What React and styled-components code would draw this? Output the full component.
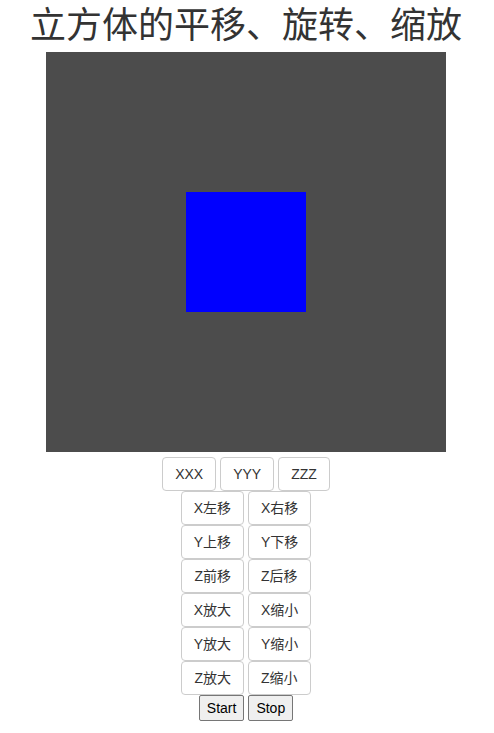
import React from "react";
import styled, { createGlobalStyle } from "styled-components";

const Global = createGlobalStyle`
  html, body { margin: 0; padding: 0; background: #fff; }
  body {
    margin: 0 10px 8px 8px;
    font-family: "Liberation Sans", Arial, "Noto Sans CJK SC", sans-serif;
    font-size: 14px;
    line-height: 1.42857;
    color: #333;
  }
`;

const Page = styled.div`
  display: flex;
  flex-direction: column;
  align-items: center;
`;

const Title = styled.h1`
  margin: 0 0 8px;
  font-family: "Noto Sans CJK SC", "Microsoft YaHei", sans-serif;
  font-weight: 400;
  font-size: 36px;
  line-height: 44px;
  color: #333;
  text-align: center;
  white-space: nowrap;
`;

const Stage = styled.div`
  width: 400px;
  height: 400px;
  background: #4c4c4c;
  display: flex;
  align-items: center;
  justify-content: center;
`;

const Cube = styled.div`
  width: 120px;
  height: 120px;
  background: #0000ff;
`;

const Row = styled.div`
  display: flex;
  justify-content: center;
  gap: 4px;
  margin-top: ${(p) => p.$top || 0}px;
`;

const Btn = styled.button`
  box-sizing: border-box;
  height: 34px;
  padding: 6px 12px;
  font-family: "Liberation Sans", Arial, "Noto Sans CJK SC", sans-serif;
  font-size: 14px;
  line-height: 20px;
  color: #333;
  background: #fff;
  border: 1px solid #ccc;
  border-radius: 4px;
  white-space: nowrap;
  cursor: pointer;
`;

const PlainBtn = styled.button`
  box-sizing: border-box;
  height: 26px;
  padding: 1px 7px;
  font-family: "Liberation Sans", Arial, sans-serif;
  font-size: 14px;
  line-height: 20px;
  color: #000;
  background: #efefef;
  border: 1px solid #767676;
  border-radius: 2px;
`;

const rows = [
  ["X左移", "X右移"],
  ["Y上移", "Y下移"],
  ["Z前移", "Z后移"],
  ["X放大", "X缩小"],
  ["Y放大", "Y缩小"],
  ["Z放大", "Z缩小"],
];

export default function App() {
  return (
    <>
      <Global />
      <Page>
        <Title>立方体的平移、旋转、缩放</Title>
        <Stage>
          <Cube />
        </Stage>
        <Row $top={5}>
          <Btn>XXX</Btn>
          <Btn>YYY</Btn>
          <Btn>ZZZ</Btn>
        </Row>
        {rows.map((r) => (
          <Row key={r[0]}>
            {r.map((t) => (
              <Btn key={t}>{t}</Btn>
            ))}
          </Row>
        ))}
        <Row>
          <PlainBtn>Start</PlainBtn>
          <PlainBtn>Stop</PlainBtn>
        </Row>
      </Page>
    </>
  );
}
